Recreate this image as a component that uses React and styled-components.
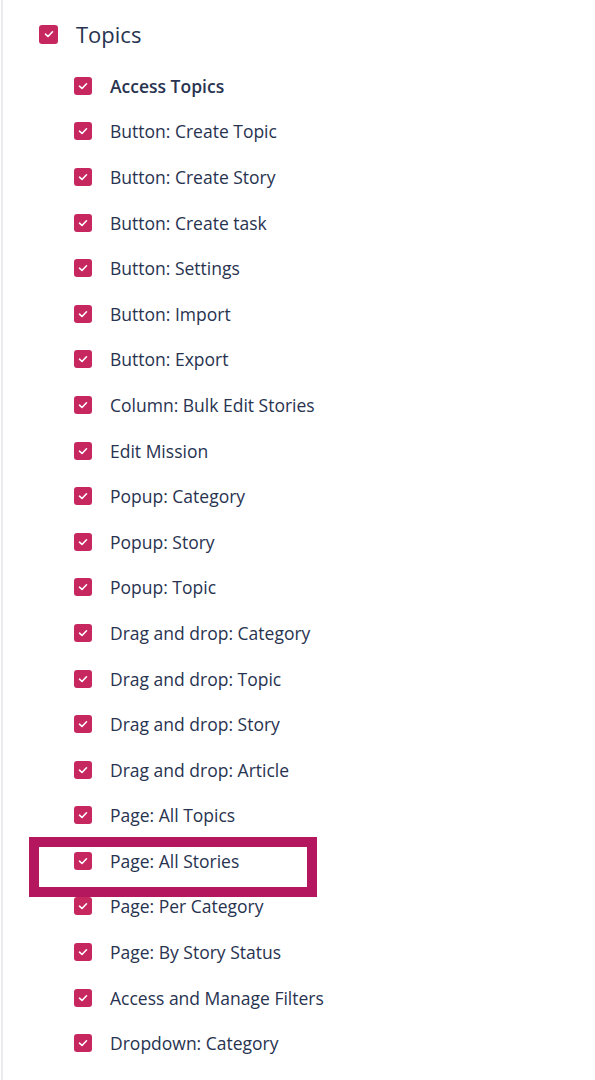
import React from 'react';
import styled, { createGlobalStyle } from "styled-components";

const GlobalStyle = createGlobalStyle`
	body {
		margin: 0;
		background: #ffffff;
		font-family: "Open Sans", "Noto Sans", sans-serif;
		color: #283350;
	}
`

const Panel = styled.div`
	margin-left: 1px;
	border-left: 2px solid #e9ebf1;
	min-height: 1080px;
	padding: 13px 0 0 36px;
	box-sizing: border-box;
`

const Heading = styled.div`
	display: flex;
	align-items: center;
	gap: 18px;
	height: 42px;
	font-size: 22px;
	font-weight: 500;
`

const List = styled.div`
	padding-left: 35px;
	padding-top: 8px;
`

const Row = styled.div`
	position: relative;
	display: flex;
	align-items: center;
	gap: 18px;
	height: 45.6px;
	font-size: 17.5px;
	font-weight: ${props => props.bold ? 600 : 400};
`

const Box = styled.span`
	display: inline-flex;
	align-items: center;
	justify-content: center;
	flex: none;
	width: ${props => props.size}px;
	height: ${props => props.size}px;
	border-radius: 3px;
	background: #c7275f;
`

const Highlight = styled.div`
	position: absolute;
	left: -45px;
	top: -1px;
	width: 288px;
	height: 60px;
	border: 10px solid #b5175f;
	box-sizing: border-box;
	pointer-events: none;
`

const Check = ({ size }) => (
	<Box size={size}>
		<svg width="10" height="8" viewBox="0 0 10 8" fill="none">
			<path d="M1.5 4.2 L4 6.5 L8.5 1.8" stroke="#fff" strokeWidth="1.6" strokeLinecap="round" strokeLinejoin="round" />
		</svg>
	</Box>
)

const items = [
	"Access Topics",
	"Button: Create Topic",
	"Button: Create Story",
	"Button: Create task",
	"Button: Settings",
	"Button: Import",
	"Button: Export",
	"Column: Bulk Edit Stories",
	"Edit Mission",
	"Popup: Category",
	"Popup: Story",
	"Popup: Topic",
	"Drag and drop: Category",
	"Drag and drop: Topic",
	"Drag and drop: Story",
	"Drag and drop: Article",
	"Page: All Topics",
	"Page: All Stories",
	"Page: Per Category",
	"Page: By Story Status",
	"Access and Manage Filters",
	"Dropdown: Category",
]

class App extends React.Component {
	render() {
		return (
			<>
				<GlobalStyle />
				<Panel>
					<Heading>
						<Check size={19} />
						Topics
					</Heading>
					<List>
						{items.map((label, i) => (
							<Row key={label} bold={i === 0}>
								<Check size={18} />
								{label}
								{label === "Page: All Stories" && <Highlight />}
							</Row>
						))}
					</List>
				</Panel>
			</>
		)
	}
}

export default App;
